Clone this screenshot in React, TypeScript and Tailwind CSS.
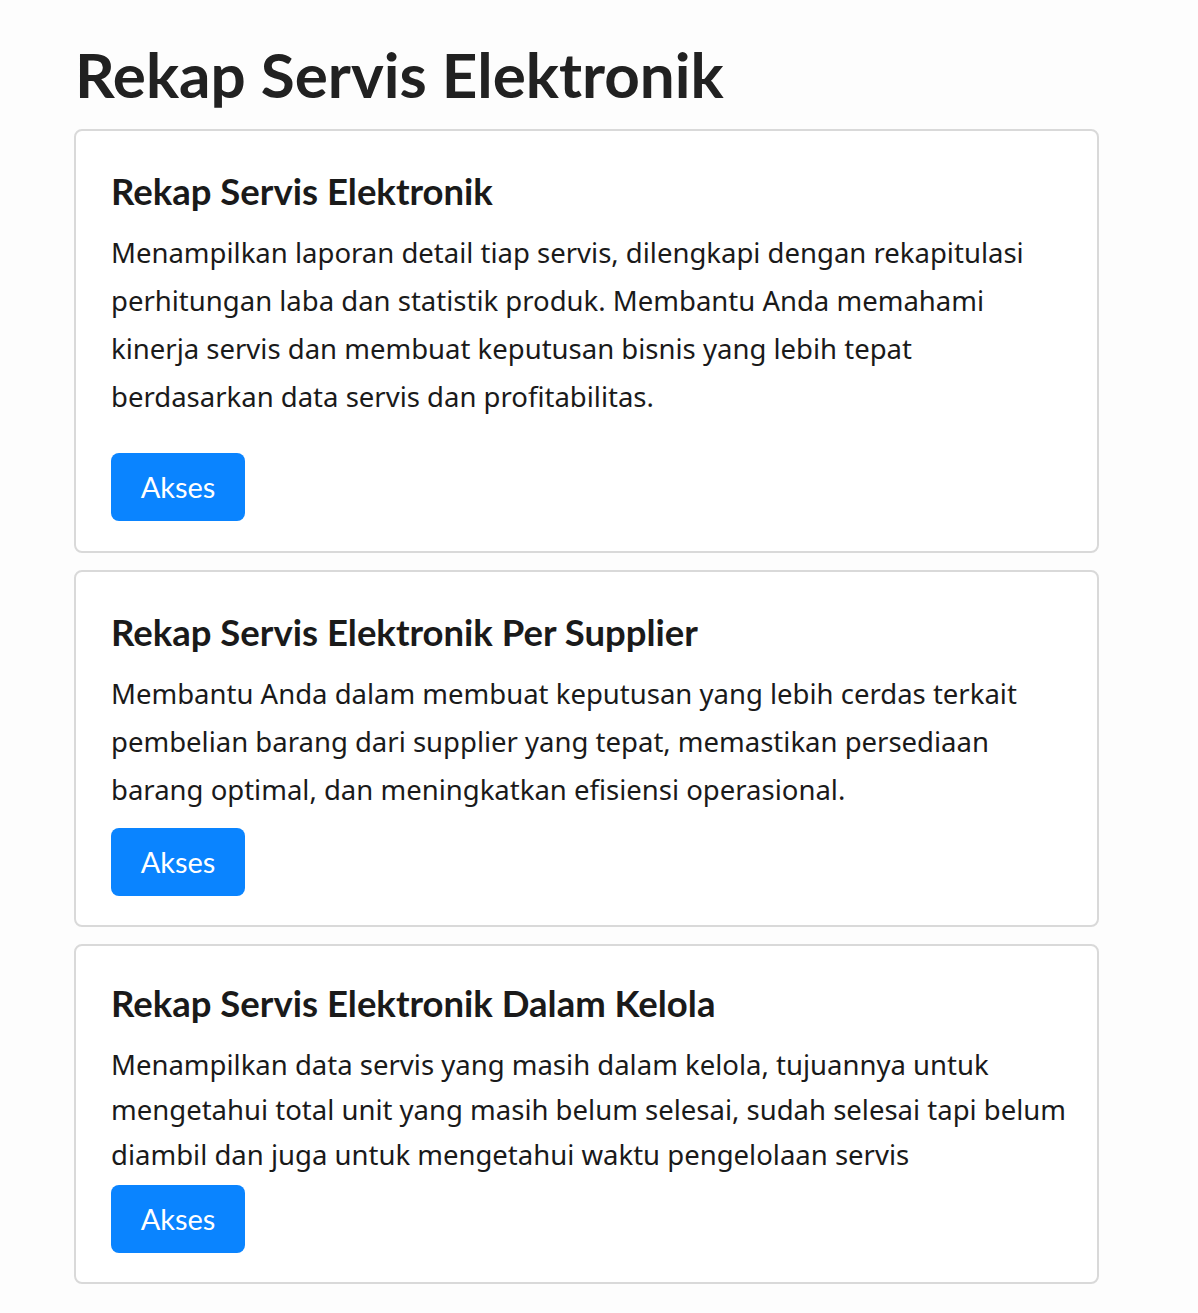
import React from "react";

const body = { fontFamily: "'Noto Sans', 'Open Sans', sans-serif" };

export default function App() {
  return (
    <div className="min-h-[1313px] bg-[#fdfdfd] text-[#1a1a1a]" style={{ fontFamily: "Lato, 'Noto Sans', sans-serif" }}>
      <div className="w-[1025px] ml-[74px] pt-[34px] pb-[28px]">
        <h1 className="text-[62px] leading-[80px] font-bold mb-[15px] ml-[1px] text-[#212121]">Rekap Servis Elektronik</h1>
        <div className="flex flex-col gap-[17px]">
          <div className="border-2 border-[#d9d9d9] rounded-[8px] bg-white pl-[35px] pr-[20px] pt-[38px] pb-[30px]">
            <h2 className="text-[36.5px] leading-[44px] font-bold mb-[16px]">Rekap Servis Elektronik</h2>
            <p className="text-[27.5px] leading-[48px] mb-[32px]" style={body}>Menampilkan laporan detail tiap servis, dilengkapi dengan rekapitulasi perhitungan laba dan statistik produk. Membantu Anda memahami kinerja servis dan membuat keputusan bisnis yang lebih tepat berdasarkan data servis dan profitabilitas.</p>
            <button className="w-[134px] h-[68px] rounded-[8px] bg-[#0a84ff] text-white text-[29px]">Akses</button>
          </div>
          <div className="border-2 border-[#d9d9d9] rounded-[8px] bg-white pl-[35px] pr-[20px] pt-[38px] pb-[29px]">
            <h2 className="text-[36.5px] leading-[44px] font-bold mb-[16px]">Rekap Servis Elektronik Per Supplier</h2>
            <p className="text-[27.5px] leading-[48px] mb-[14px]" style={body}>Membantu Anda dalam membuat keputusan yang lebih cerdas terkait pembelian barang dari supplier yang tepat, memastikan persediaan barang optimal, dan meningkatkan efisiensi operasional.</p>
            <button className="w-[134px] h-[68px] rounded-[8px] bg-[#0a84ff] text-white text-[29px]">Akses</button>
          </div>
          <div className="border-2 border-[#d9d9d9] rounded-[8px] bg-white pl-[35px] pr-[20px] pt-[35px] pb-[29px]">
            <h2 className="text-[36.5px] leading-[44px] font-bold mb-[17px]">Rekap Servis Elektronik Dalam Kelola</h2>
            <p className="text-[27.5px] leading-[45px] mb-[8px]" style={body}>Menampilkan data servis yang masih dalam kelola, tujuannya untuk mengetahui total unit yang masih belum selesai, sudah selesai tapi belum diambil dan juga untuk mengetahui waktu pengelolaan servis</p>
            <button className="w-[134px] h-[68px] rounded-[8px] bg-[#0a84ff] text-white text-[29px]">Akses</button>
          </div>
        </div>
      </div>
    </div>
  );
}
